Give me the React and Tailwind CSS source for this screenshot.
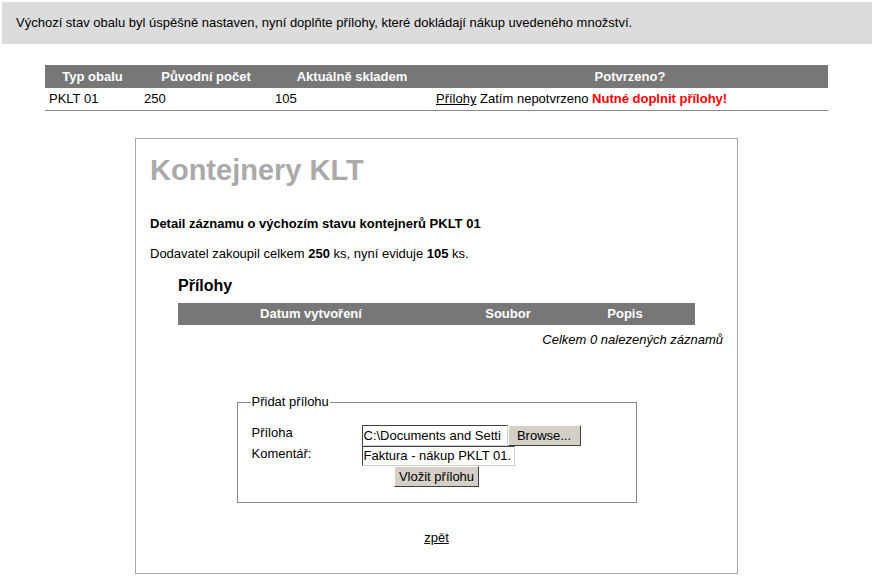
import React from "react";

const font = { fontFamily: '"Liberation Sans", Arial, sans-serif' };

const Win98Button = ({ children, className = "" }) => (
	<div
		className={`flex items-center justify-center h-[21px] bg-[#d4d0c8] border border-t-white border-l-white border-r-[#404040] border-b-[#404040] ${className}`}
	>
		{children}
	</div>
);

const TextBox = ({ value, className = "" }) => (
	<div
		className={`h-[20px] bg-white border border-t-[#404040] border-l-[#404040] border-r-[#d4d0c8] border-b-[#d4d0c8] overflow-hidden whitespace-nowrap leading-[18px] pl-[1px] ${className}`}
	>
		{value}
	</div>
);

const App = () => {
	return (
		<div className="w-[874px] h-[577px] bg-white text-[13px] text-black p-[2px] overflow-hidden" style={font}>
			{/* Info banner */}
			<div className="h-[42px] bg-[#dcdcdc] flex items-center pl-[14px]">
				Výchozí stav obalu byl úspěšně nastaven, nyní doplňte přílohy, které dokládají nákup uvedeného množství.
			</div>

			{/* Summary table */}
			<div className="mt-[21px] ml-[43px] w-[783px]">
				<div className="grid grid-cols-[95px_132px_160px_1fr] h-[23px] bg-[#777777] text-white font-bold items-center text-center">
					<div>Typ obalu</div>
					<div>Původní počet</div>
					<div>Aktuálně skladem</div>
					<div>Potvrzeno?</div>
				</div>
				<div className="grid grid-cols-[95px_132px_160px_1fr] h-[23px] border-b border-[#888888] items-center">
					<div className="pl-[4px]">PKLT 01</div>
					<div className="pl-[4px]">250</div>
					<div className="pl-[3px]">105</div>
					<div className="pl-[4px]">
						<span className="underline">Přílohy</span> Zatím nepotvrzeno{" "}
						<span className="text-[#ff0000] font-bold">Nutné doplnit přílohy!</span>
					</div>
				</div>
			</div>

			{/* Detail box */}
			<div className="mt-[27px] ml-[133px] w-[603px] h-[436px] border border-[#aaaaaa] px-[14px]">
				<div className="mt-[14px] h-[34px] leading-[34px] text-[29px] font-bold text-[#aaaaaa]">Kontejnery KLT</div>

				<div className="mt-[29px] leading-[16px] font-bold">Detail záznamu o výchozím stavu kontejnerů PKLT 01</div>

				<div className="mt-[14px] leading-[16px]">
					Dodavatel zakoupil celkem <b>250</b> ks, nyní eviduje <b>105</b> ks.
				</div>

				<div className="mx-[28px]">
					<div className="mt-[14px] h-[20px] leading-[20px] text-[16px] font-bold">Přílohy</div>
					<div className="mt-[7px] grid grid-cols-[266px_128px_106px_1fr] h-[22px] bg-[#777777] text-white font-bold items-center text-center">
						<div>Datum vytvoření</div>
						<div>Soubor</div>
						<div>Popis</div>
						<div></div>
					</div>
				</div>

				<div className="mt-[7px] leading-[16px] italic text-right">Celkem 0 nalezených záznamů</div>

				{/* Add attachment */}
				<fieldset className="mt-[46px] mx-auto w-[400px] border border-[#888888] px-[14px] pb-[15px]">
					<legend className="ml-[-1px] px-[1px] leading-[16px]">Přidat přílohu</legend>
					<div className="mt-[15px] flex h-[21px]">
						<div className="w-[110px] leading-[15px]">Příloha</div>
						<TextBox value="C:\Documents and Setti" className="w-[146px] h-[21px] leading-[19px]" />
						<Win98Button className="w-[73px]">Browse...</Win98Button>
					</div>
					<div className="flex h-[20px]">
						<div className="w-[110px] leading-[16px]">Komentář:</div>
						<TextBox value="Faktura - nákup PKLT 01." className="w-[153px]" />
					</div>
					<div className="flex justify-center">
						<Win98Button className="w-[85px]">Vložit přílohu</Win98Button>
					</div>
				</fieldset>

				<div className="mt-[27px] leading-[16px] text-center">
					<span className="underline">zpět</span>
				</div>
			</div>
		</div>
	);
};

export default App;
